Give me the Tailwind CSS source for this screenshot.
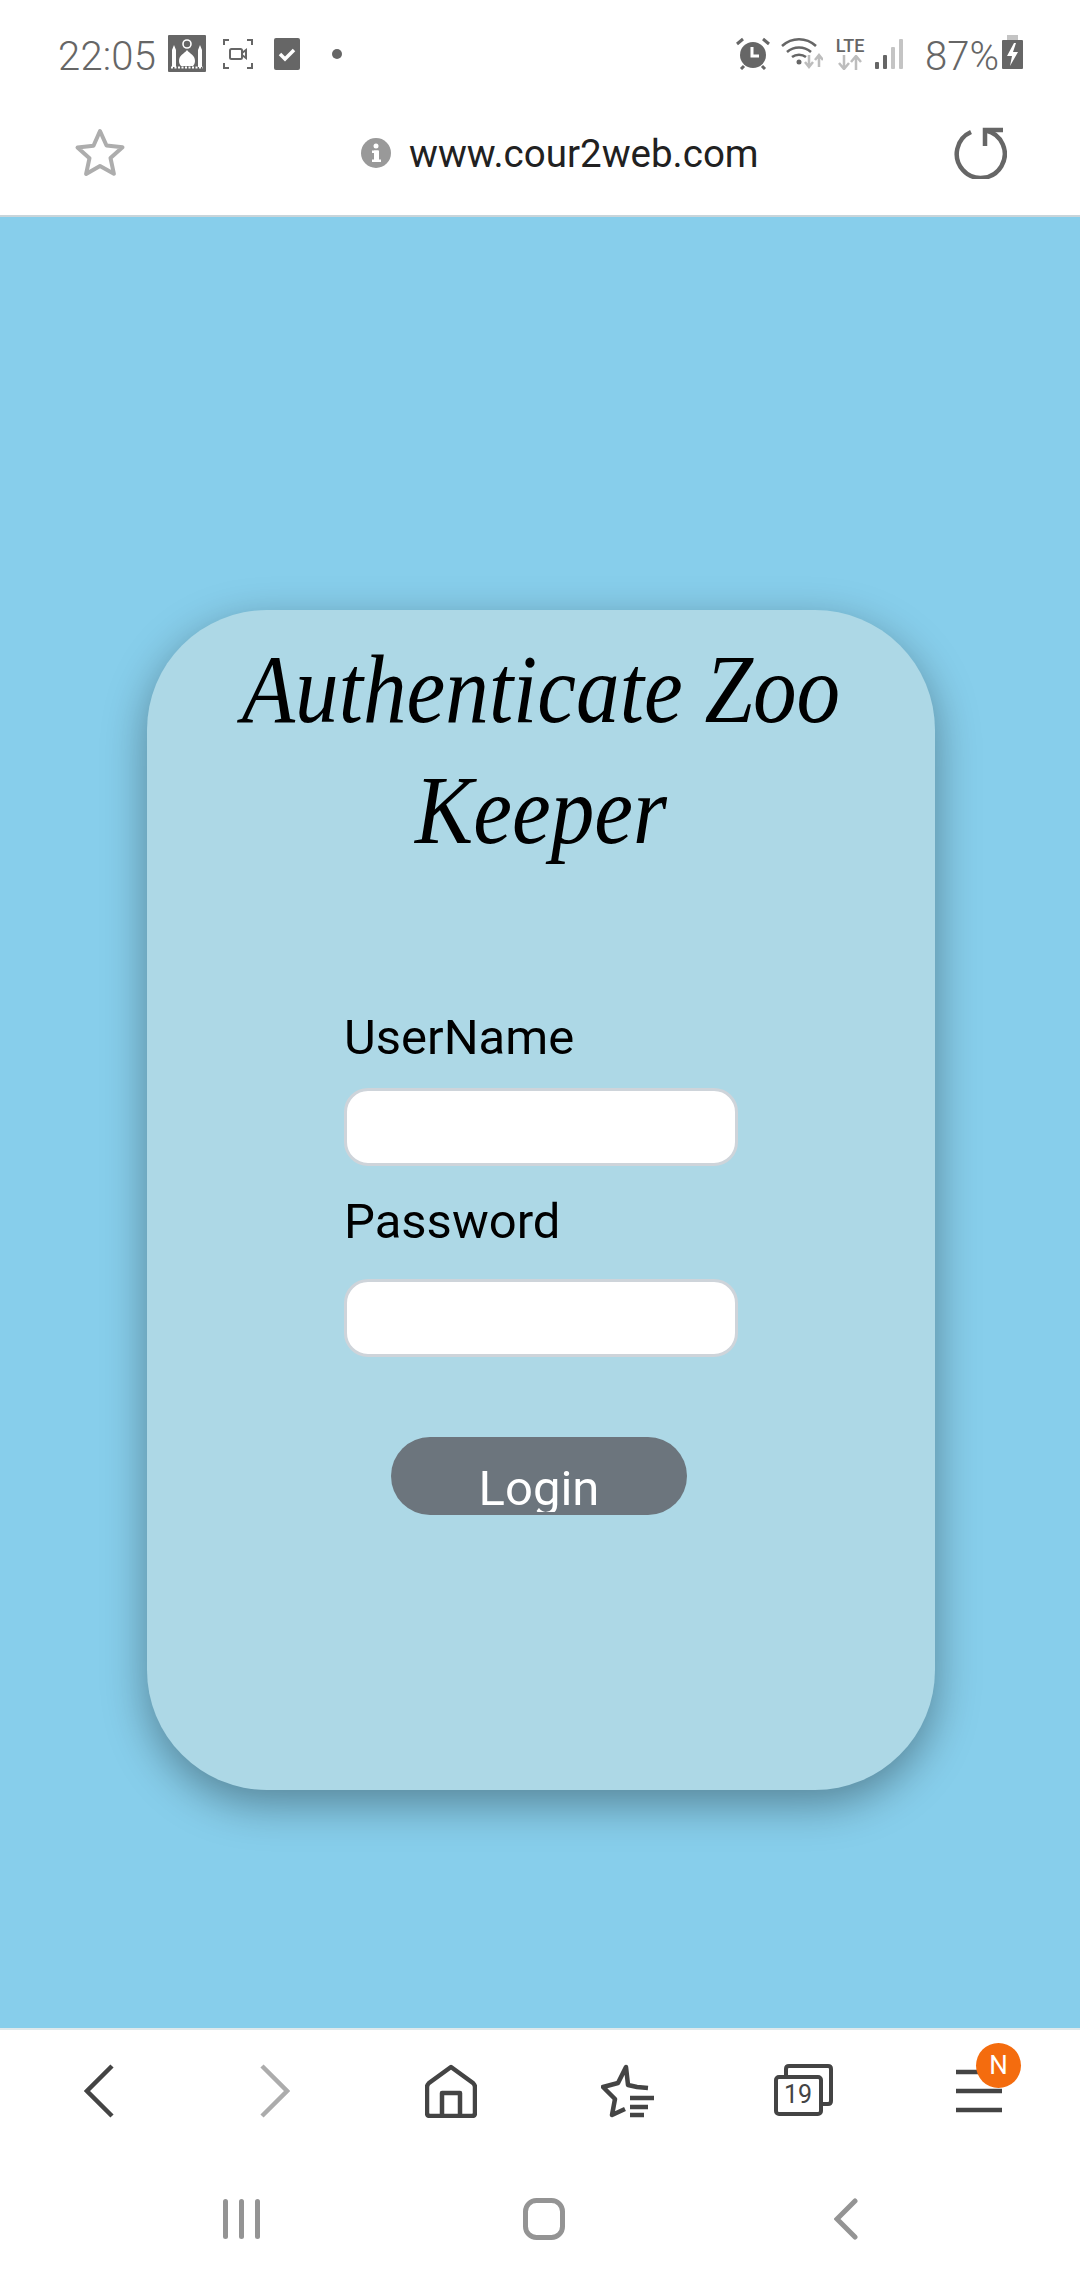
<!DOCTYPE html>
<html lang="en">
<head>
    <meta charset="UTF-8">
    <meta name="viewport" content="width=device-width, initial-scale=1.0">
    <title>Authenticate Zoo Keeper</title>
    <script src="https://cdn.jsdelivr.net/npm/@tailwindcss/browser@4"></script>
</head>
<body class="w-[1080px] h-[2280px] flex flex-col bg-white overflow-hidden font-['Roboto',sans-serif]">

    <!-- Status bar -->
    <div class="h-[90px] shrink-0 flex items-start justify-between pl-[58px] pr-[57px] pt-[35px] text-[#666666]">
        <div class="flex items-start">
            <span class="text-[40px] leading-[38px] font-light tracking-[0.2px] w-[110px] mt-[3px]">22:05</span>
            <svg class="w-[38px] h-[37px]" viewBox="0 0 38 37">
                <rect width="38" height="37" rx="1" fill="#666"/>
                <circle cx="19" cy="9" r="4" fill="none" stroke="#fff" stroke-width="1.6"/>
                <path d="M19 15c3 4 8 5 8 11 0 2-1 4-2 5H13c-1-1-2-3-2-5 0-6 5-7 8-11z" fill="#fff"/>
                <path d="M6 10l2 5v17H4V15zM32 10l2 5v17h-4V15z" fill="#fff"/>
                <path d="M3 32.500h32" stroke="#fff" stroke-width="2" stroke-dasharray="2 1.500"/>
            </svg>
            <svg class="w-[30px] h-[30px] ml-[17px] mt-[4px]" viewBox="0 0 30 30" fill="none" stroke="#666" stroke-width="2">
                <path d="M1 6V1h5M24 1h5v5M1 24v5h5M24 29h5v-5"/>
                <rect x="7" y="10" width="12" height="10" rx="1.500" stroke-width="2"/>
                <path d="M19 14l4-3v8l-4-3" stroke-width="2"/>
            </svg>
            <svg class="w-[26px] h-[32px] ml-[21px] mt-[3px]" viewBox="0 0 26 32">
                <rect width="26" height="32" rx="2" fill="#666"/>
                <path d="M6 16l5 5 9-9" fill="none" stroke="#fff" stroke-width="3.500"/>
            </svg>
            <span class="w-[10px] h-[10px] rounded-full bg-[#666666] ml-[32px] mt-[14px]"></span>
        </div>
        <div class="flex items-start">
            <svg class="w-[34px] h-[33px] mt-[2px]" viewBox="0 0 34 33">
                <circle cx="17" cy="18" r="13" fill="#666"/>
                <path d="M16 10v9h7" fill="none" stroke="#fff" stroke-width="3"/>
                <path d="M1 7l6-5M33 7l-6-5M5 32l3-3M29 32l-3-3" stroke="#666" stroke-width="3"/>
            </svg>
            <svg class="w-[42px] h-[33px] ml-[11px] mt-[2px]" viewBox="0 0 42 33" fill="none">
                <path d="M1 9c10-9 24-9 34 0M6 15c7-6 17-6 24 0M11 20c4-3 10-3 14 0" stroke="#666" stroke-width="2.600"/>
                <circle cx="18" cy="25" r="2.500" fill="#666"/>
                <path d="M28 18v11M24 25l4 5 4-5M38 30V19M34 23l4-5 4 5" stroke="#bdbdbd" stroke-width="2.500"/>
            </svg>
            <div class="w-[30px] ml-[12px] mt-[2px] flex flex-col items-center">
                <span class="text-[18px] leading-[17px] font-medium text-[#666666]">LTE</span>
                <svg class="w-[24px] h-[15px] mt-[1px]" viewBox="0 0 24 15" fill="none" stroke="#bdbdbd" stroke-width="2.500">
                    <path d="M6 0v13M1 8l5 6 5-6M18 15V2M13 7l5-6 5 6"/>
                </svg>
            </div>
            <svg class="w-[28px] h-[30px] ml-[10px] mt-[4px]" viewBox="0 0 28 30">
                <rect x="0" y="23" width="4" height="7" rx="1" fill="#666"/>
                <rect x="8" y="16" width="4" height="14" rx="1" fill="#666"/>
                <rect x="16" y="8" width="4" height="22" rx="1" fill="#c4c4c4"/>
                <rect x="24" y="0" width="4" height="30" rx="1" fill="#c4c4c4"/>
            </svg>
            <span class="text-[40px] leading-[38px] font-light ml-[22px] w-[77px] mt-[3px]">87%</span>
            <svg class="w-[21px] h-[34px]" viewBox="0 0 21 34">
                <rect x="5" y="0" width="11" height="6" fill="#c4c4c4"/>
                <rect x="0" y="5" width="21" height="29" rx="1" fill="#666"/>
                <path d="M12 8l-7 13h5l-2 10 8-14h-5l3-9z" fill="#fff"/>
            </svg>
        </div>
    </div>

    <!-- Browser url bar -->
    <div class="h-[127px] shrink-0 flex items-center pl-[74px] pr-[73px] border-b-2 border-[#c9d5da]">
        <svg class="w-[52px] h-[52px]" viewBox="0 0 52 52" fill="none">
            <path d="M26 4l6.500 14.500 16 1.800-12 10.700 3.400 15.800L26 39l-13.900 8 3.400-15.800-12-10.700 16-1.800z" stroke="#adadad" stroke-width="4" stroke-linejoin="round"/>
        </svg>
        <div class="flex-1 flex items-center pl-[235px]">
            <svg class="w-[30px] h-[30px]" viewBox="0 0 30 30">
                <circle cx="15" cy="15" r="15" fill="#999"/>
                <rect x="13" y="12.500" width="5" height="11" fill="#fff"/>
                <rect x="11" y="12.500" width="6" height="2.500" fill="#fff"/>
                <rect x="11" y="21.500" width="9" height="2.500" fill="#fff"/>
                <circle cx="15" cy="8" r="2.500" fill="#fff"/>
            </svg>
            <span class="ml-[18px] mt-[2px] text-[38.500px] leading-[44px] text-[#212121]">www.cour2web.com</span>
        </div>
        <svg class="w-[54px] h-[52px]" viewBox="0 0 54 52" fill="none" stroke="#666" stroke-width="4.500">
            <path d="M18 5A24 24 0 1 0 33 3.500"/>
            <path d="M32 19V3h18"/>
        </svg>
    </div>

    <!-- Page -->
    <main class="flex-1 bg-[#87ceeb] pt-[393px]">
        <div class="w-[788px] h-[1180px] ml-[147px] bg-[#add8e6] rounded-[120px] shadow-[0_14px_44px_rgba(0,0,0,0.36)] pt-[19px] text-black">
            <h1 class="text-center px-[40px] font-['Liberation_Serif',serif] italic text-[98px] leading-[121px] scale-x-[0.89]">Authenticate Zoo Keeper</h1>
            <form class="w-[394px] mx-auto mt-[138px]">
                <label class="block text-[49px] leading-[57px]">UserName</label>
                <input type="text" class="block w-full h-[78px] mt-[22px] bg-white rounded-[24px] border-[3px] border-[#ced4da]">
                <label class="block text-[49px] leading-[57px] mt-[27px]">Password</label>
                <input type="password" class="block w-full h-[78px] mt-[29px] bg-white rounded-[24px] border-[3px] border-[#ced4da]">
                <button type="button" class="flex flex-col items-center w-[296px] h-[78px] mt-[80px] ml-[47px] bg-[#6c757d] rounded-[40px] text-white pt-[23px]">
                    <span class="block h-[52px] overflow-hidden text-[49px] leading-[57px]">Login</span>
                </button>
            </form>
        </div>
    </main>

    <!-- Browser toolbar -->
    <div class="h-[252px] shrink-0 bg-white border-t-2 border-[#dfe9ec]">
        <div class="h-[140px] grid grid-cols-[repeat(6,176px)] px-[11px] pt-[34px]">
            <div class="flex justify-center">
                <svg class="w-[30px] h-[54px]" viewBox="0 0 30 54" fill="none" stroke="#444" stroke-width="4.500"><path d="M28 2L3 27l25 25"/></svg>
            </div>
            <div class="flex justify-center">
                <svg class="w-[30px] h-[54px]" viewBox="0 0 30 54" fill="none" stroke="#acacac" stroke-width="4.500"><path d="M2 2l25 25L2 52"/></svg>
            </div>
            <div class="flex justify-center">
                <svg class="w-[52px] h-[54px]" viewBox="0 0 52 54" fill="none" stroke="#444" stroke-width="4.500" stroke-linejoin="round">
                    <path d="M26 3L4 19c-1 1-2 2-2 4v26c0 2 1 3 3 3h42c2 0 3-1 3-3V23c0-2-1-3-2-4z"/>
                    <path d="M17 52V29h18v23"/>
                </svg>
            </div>
            <div class="flex justify-center">
                <svg class="w-[53px] h-[54px]" viewBox="0 0 53 54" fill="none" stroke="#444" stroke-width="4.500" stroke-linejoin="round">
                    <path d="M47 24l-11-1-9-2L25 3l-8 16-15 4 12 12-3 16 13-6"/>
                    <path d="M29 34h24M29 43h18M29 51h14" stroke-width="4.500"/>
                </svg>
            </div>
            <div class="flex justify-center">
                <div class="relative w-[59px] h-[52px]">
                    <svg class="w-[59px] h-[52px]" viewBox="0 0 59 52" fill="none" stroke="#444" stroke-width="4">
                        <path d="M12 11V5c0-2 1-3 3-3h39c2 0 3 1 3 3v32c0 2-1 3-3 3h-7"/>
                        <rect x="2" y="13" width="45" height="37" rx="3"/>
                    </svg>
                    <span class="absolute left-[2px] top-[14px] w-[45px] text-center text-[25px] leading-[34px] text-[#444444]">19</span>
                </div>
            </div>
            <div class="flex justify-center">
                <div class="relative w-[46px] h-[52px] mt-[4px]">
                    <svg class="w-[46px] h-[46px]" viewBox="0 0 46 46" fill="none" stroke="#444" stroke-width="4.500">
                        <path d="M0 4h46M0 23h46M0 42h46"/>
                    </svg>
                    <span class="absolute left-[20px] top-[-25px] w-[45px] h-[45px] rounded-full bg-[#f46c0e] text-white text-center text-[26px] leading-[45px]">N</span>
                </div>
            </div>
        </div>

        <!-- Android nav -->
        <div class="grid grid-cols-[repeat(3,302px)] pl-[91px] pt-[28px]">
            <div class="flex justify-center">
                <svg class="w-[38px] h-[42px]" viewBox="0 0 38 42" fill="#949494">
                    <rect x="0" y="1" width="5" height="40" rx="2.500"/>
                    <rect x="16" y="1" width="5" height="40" rx="2.500"/>
                    <rect x="32" y="1" width="5" height="40" rx="2.500"/>
                </svg>
            </div>
            <div class="flex justify-center">
                <svg class="w-[42px] h-[42px]" viewBox="0 0 42 42" fill="none" stroke="#949494" stroke-width="5">
                    <rect x="2.500" y="2.500" width="37" height="37" rx="11"/>
                </svg>
            </div>
            <div class="flex justify-center">
                <svg class="w-[24px] h-[42px]" viewBox="0 0 24 42" fill="none" stroke="#949494" stroke-width="5" stroke-linecap="round">
                    <path d="M21 3L3 21l18 18"/>
                </svg>
            </div>
        </div>
    </div>
</body>
</html>
